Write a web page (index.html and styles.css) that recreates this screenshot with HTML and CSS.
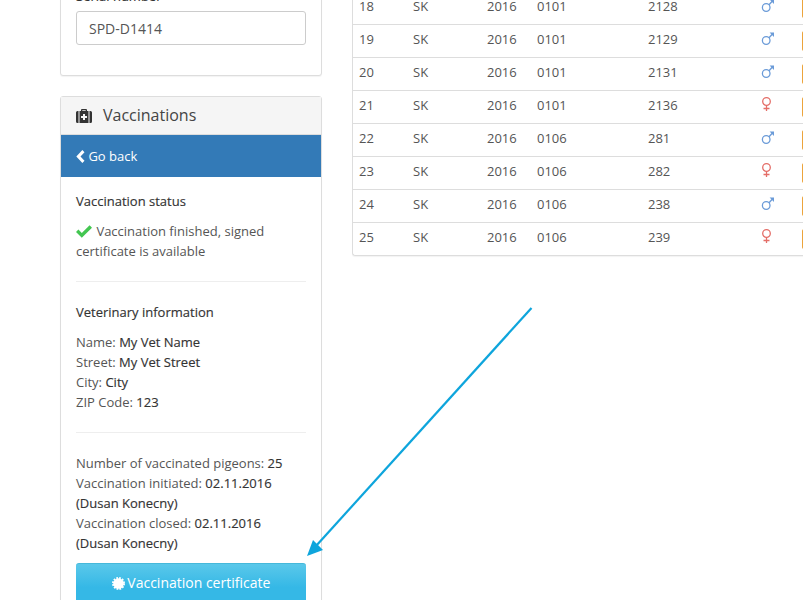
FILE: index.html
```html
<!DOCTYPE html>
<html lang="en">
<head>
<meta charset="utf-8">
<title>Vaccinations</title>
<link rel="stylesheet" href="styles.css">
</head>
<body>
<div class="page">
  <aside class="side">
    <section class="panel serial">
      <label class="label">Serial number</label>
      <div class="input">SPD-D1414</div>
    </section>
    <section class="panel vacc">
      <h2 class="head">
        <svg class="kit" viewBox="0 0 16 14" width="16" height="14"><path fill="#333" fill-rule="evenodd" d="M5 2V1a1 1 0 0 1 1-1h4a1 1 0 0 1 1 1v1h1.500v12h-9V2zM6.300 2h3.400V1.200H6.300zM7 5v2H5v2h2v2h2V9h2V7H9V5zM0 3.500A1.500 1.500 0 0 1 1.500 2H2.500v12H1.500A1.500 1.500 0 0 1 0 12.500zM13.500 2h1A1.500 1.500 0 0 1 16 3.500v9a1.500 1.500 0 0 1-1.500 1.500h-1z"/></svg>
        <span>Vaccinations</span>
      </h2>
      <div class="back"><svg class="chev" viewBox="0 0 9 14" width="9" height="13"><path fill="#fff" d="M6.500 0 8.800 2.300 4.500 7 8.800 11.700 6.500 14 0 7z"/></svg> Go back</div>
      <div class="body">
        <h3 class="sub">Vaccination status</h3>
        <p class="text"><svg class="check" viewBox="0 0 16 13" width="16" height="13"><path fill="#43c651" d="M5.800 12.800 0 7l2.400-2.400 3.400 3.400L13.600 0.300 16 2.700z"/></svg> Vaccination finished, signed certificate is available</p>
        <hr class="rule">
        <h3 class="sub">Veterinary information</h3>
        <p class="text">Name: <b>My Vet Name</b><br>Street: <b>My Vet Street</b><br>City: <b>City</b><br>ZIP Code: <b>123</b></p>
        <hr class="rule">
        <p class="text">Number of vaccinated pigeons: <b>25</b><br>Vaccination initiated: <b>02.11.2016 (Dusan Konecny)</b><br>Vaccination closed: <b>02.11.2016 (Dusan Konecny)</b></p>
        <div class="cert"><svg class="seal" viewBox="0 0 14 14" width="13" height="13"><circle cx="7" cy="7" r="5.600" fill="#fff"/><circle cx="7" cy="7" r="6" fill="none" stroke="#fff" stroke-width="2" stroke-dasharray="1.900 1.240"/></svg> Vaccination certificate</div>
      </div>
    </section>
  </aside>
  <main class="main">
    <table class="grid">
      <colgroup><col class="c1"><col class="c2"><col class="c3"><col class="c4"><col class="c5"><col class="c6"><col class="c7"></colgroup>
      <tbody>
        <tr><td>18</td><td>SK</td><td>2016</td><td>0101</td><td>2128</td><td><svg class="sex" viewBox="0 0 14 14" width="14" height="14"><use href="#male"/></svg></td><td><span class="act"></span></td></tr>
        <tr><td>19</td><td>SK</td><td>2016</td><td>0101</td><td>2129</td><td><svg class="sex" viewBox="0 0 14 14" width="14" height="14"><use href="#male"/></svg></td><td><span class="act"></span></td></tr>
        <tr><td>20</td><td>SK</td><td>2016</td><td>0101</td><td>2131</td><td><svg class="sex" viewBox="0 0 14 14" width="14" height="14"><use href="#male"/></svg></td><td><span class="act"></span></td></tr>
        <tr><td>21</td><td>SK</td><td>2016</td><td>0101</td><td>2136</td><td><svg class="sex" viewBox="0 0 14 14" width="14" height="14"><use href="#female"/></svg></td><td><span class="act"></span></td></tr>
        <tr><td>22</td><td>SK</td><td>2016</td><td>0106</td><td>281</td><td><svg class="sex" viewBox="0 0 14 14" width="14" height="14"><use href="#male"/></svg></td><td><span class="act"></span></td></tr>
        <tr><td>23</td><td>SK</td><td>2016</td><td>0106</td><td>282</td><td><svg class="sex" viewBox="0 0 14 14" width="14" height="14"><use href="#female"/></svg></td><td><span class="act"></span></td></tr>
        <tr><td>24</td><td>SK</td><td>2016</td><td>0106</td><td>238</td><td><svg class="sex" viewBox="0 0 14 14" width="14" height="14"><use href="#male"/></svg></td><td><span class="act"></span></td></tr>
        <tr><td>25</td><td>SK</td><td>2016</td><td>0106</td><td>239</td><td><svg class="sex" viewBox="0 0 14 14" width="14" height="14"><use href="#female"/></svg></td><td><span class="act"></span></td></tr>
      </tbody>
    </table>
  </main>
</div>
<svg class="defs" width="0" height="0">
  <defs>
    <g id="male" fill="none" stroke="#6b9bd8" stroke-width="1.300"><circle cx="5.200" cy="9.500" r="3.800"/><path d="M8 6.800 11.500 3"/><path fill="#6b9bd8" stroke="none" d="M8.600 1.500H13V6z"/></g>
    <g id="female" fill="none" stroke="#e46e68" stroke-width="1.300"><circle cx="5.500" cy="4.500" r="3.800"/><path d="M5.500 8.300V14M2.500 11.500H8.500"/></g>
  </defs>
</svg>
<svg class="arrow" viewBox="0 0 803 600" width="803" height="600">
  <path d="M531.500 308 316 546" stroke="#0ea5dc" stroke-width="2.200" fill="none"/>
  <path d="M307 556 313 540 323 550z" fill="#0ea5dc"/>
</svg>
</body>
</html>
```

FILE: styles.css
```css
html, body {
  margin: 0;
  height: 600px;
  overflow: hidden;
  background: #fff;
}
body {
  position: relative;
  font-family: "Open Sans", sans-serif;
  font-size: 13px;
  line-height: 20px;
  color: #555;
}
.page {
  display: flex;
  align-items: flex-start;
  gap: 30px;
  margin-top: -33px;
  padding-left: 60px;
}
.side {
  width: 262px;
  flex: none;
  display: flex;
  flex-direction: column;
  gap: 20px;
}
.panel {
  border: 1px solid #ddd;
  border-radius: 3px;
  box-shadow: 0 1px 1px rgba(0,0,0,.05);
  background: #fff;
}
.serial {
  padding: 15px 15px 30px;
  height: 109px;
  box-sizing: border-box;
}
.label {
  display: block;
  font-weight: 500;
  -webkit-text-stroke: .15px #333;
  color: #333;
  height: 28px;
  line-height: 27px;
  overflow: hidden;
}
.input {
  box-sizing: border-box;
  height: 34px;
  border: 1px solid #ccc;
  border-radius: 3px;
  padding: 7px 12px 5px;
  font-size: 14px;
  color: #555;
}
.head {
  display: flex;
  align-items: center;
  gap: 11px;
  margin: 0;
  height: 37px;
  box-sizing: content-box;
  padding: 0 15px;
  background: #f5f5f5;
  border-bottom: 1px solid #ddd;
  font-size: 16px;
  font-weight: 400;
  color: #444;
}
.head span { margin-top: -2px; }
.kit { flex: none; }
.back {
  height: 42px;
  line-height: 42px;
  padding-left: 15px;
  background: #337ab7;
  color: #fff;
  font-size: 13px;
}
.chev { vertical-align: -2px; }
.body { padding: 14px 15px 0; }
.sub {
  margin: 0 0 10px;
  font-size: 13px;
  line-height: 20px;
  font-weight: 500;
  -webkit-text-stroke: .15px #333;
  color: #333;
}
.text { margin: 0; }
.text b {
  font-weight: 500;
  -webkit-text-stroke: .15px #333;
  color: #333;
}
.check { vertical-align: -2px; margin-right: 1px; }
.rule {
  border: 0;
  border-top: 1px solid #eee;
  margin: 20px 0;
}
.cert {
  margin-top: 10px;
  height: 40px;
  line-height: 38px;
  text-align: center;
  color: #fff;
  font-size: 14px;
  border-radius: 3px;
  background: linear-gradient(#5ac8ea, #35b8e6 60%);
  border-top: 1px solid #46b8da;
  box-sizing: border-box;
}
.seal { vertical-align: -2px; margin-right: -1px; }
.main {
  flex: 1;
  min-width: 0;
  overflow: hidden;
  margin-top: 24px;
}
.grid {
  table-layout: fixed;
  width: 520px;
  border-collapse: separate;
  border-spacing: 0;
  border-left: 1px solid #ddd;
  border-bottom: 1px solid #ddd;
  border-radius: 0 0 0 3px;
  box-shadow: 0 1px 1px rgba(0,0,0,.05);
  margin-bottom: 2px;
}
.c1 { width: 54px; }
.c2 { width: 74px; }
.c3 { width: 50px; }
.c4 { width: 111px; }
.c5 { width: 113px; }
.c6 { width: 41px; }
.c7 { width: 77px; }
.grid td {
  box-sizing: border-box;
  height: 33px;
  padding: 4px 6px 0;
  color: #555;
  border-top: 1px solid #ddd;
  vertical-align: top;
}
.grid tr:first-child td { border-top-color: transparent; }
.sex { display: block; margin-top: 2px; }
.act {
  display: block;
  width: 60px;
  height: 20px;
  margin-top: 2px;
  background: #eca43c;
  border-radius: 2px;
}
.defs { position: absolute; }
.arrow {
  position: absolute;
  left: 0;
  top: 0;
  pointer-events: none;
}
```
